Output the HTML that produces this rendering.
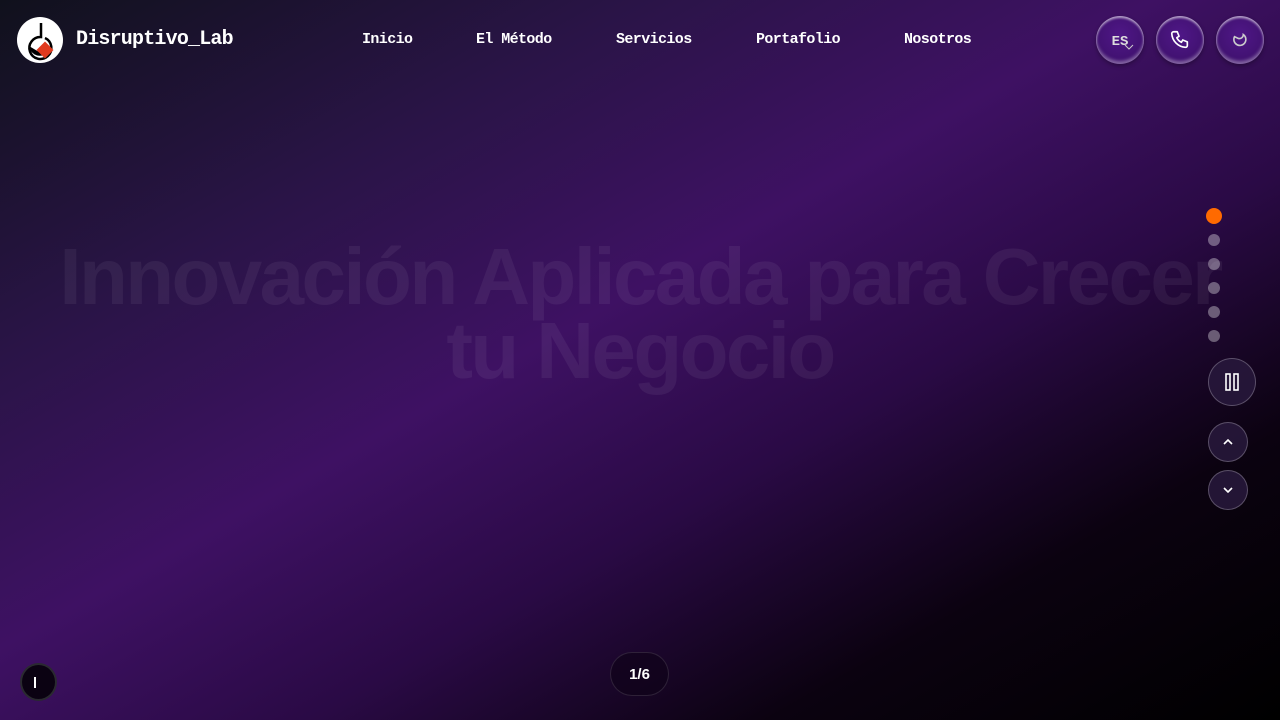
<!DOCTYPE html>
<html><head><meta charset="utf-8"><style>
*{margin:0;padding:0;box-sizing:border-box}
html,body{width:1280px;height:720px;overflow:hidden}
body{position:relative;background:linear-gradient(to bottom right,#10111c 0%,#2a1447 25%,#3e1163 45%,#2a0a45 62%,#0b0210 80%,#000 100%);font-family:"Liberation Mono",monospace;color:#fff}
.logo{position:absolute;left:17px;top:17px;width:46px;height:46px;border-radius:50%;background:#fff}
.brand{position:absolute;left:76px;top:28px;font-weight:bold;font-size:20px;letter-spacing:-0.8px}
.nav a{position:absolute;top:31px;font-weight:bold;font-size:15px;letter-spacing:-0.6px;color:#fff;text-decoration:none}
.rb{position:absolute;top:16px;width:48px;height:48px;border-radius:50%;background:radial-gradient(circle at 50% 40%,#4f1787,#3a0f66);box-shadow:inset 0 2px 2px rgba(255,255,255,.6),inset 0 -3px 3px rgba(255,255,255,.35),0 2px 4px rgba(0,0,0,.3);display:flex;align-items:center;justify-content:center}
h1{position:absolute;left:0;width:1280px;top:240px;text-align:center;font-family:"Liberation Sans",sans-serif;font-weight:bold;font-size:80px;line-height:74px;letter-spacing:-2.6px;color:rgba(255,255,255,0.06)}
.dot{position:absolute;left:1208px;width:12px;height:12px;border-radius:50%;background:rgba(255,255,255,.35)}
.cb{position:absolute;border-radius:50%;border:1px solid rgba(255,255,255,.25);background:rgba(40,25,60,.85);display:flex;align-items:center;justify-content:center}
</style></head><body>
<div class="logo"><svg width="46" height="46" viewBox="0 0 46 46"><path d="M24 6v14a11 11 0 1 0 4 1" fill="none" stroke="#000" stroke-width="2.5"/><path d="M12 29a11 11 0 0 0 15 9z" fill="#000"/><rect x="22" y="27" width="12" height="12" fill="#e03a1e" transform="rotate(45 28 33)"/></svg></div>
<div class="brand">Disruptivo_Lab</div>
<div class="nav"><a style="left:362px">Inicio</a><a style="left:476px">El Método</a><a style="left:616px">Servicios</a><a style="left:756px">Portafolio</a><a style="left:904px">Nosotros</a></div>
<div class="rb" style="left:1096px"><span style="font-weight:bold;font-size:14px;color:#ddd;margin-top:4px">ES</span><svg style="position:absolute;left:28px;top:28px" width="10" height="6"><path d="M1 1l4 4 4-4" stroke="#ccc" fill="none"/></svg></div>
<div class="rb" style="left:1156px"><svg width="22" height="22" viewBox="0 0 24 24"><path d="M5 3h4l2 5-2.5 1.5a11 11 0 0 0 5 5L15 12l5 2v4a2 2 0 0 1-2 2A16 16 0 0 1 3 5a2 2 0 0 1 2-2" fill="none" stroke="#fff" stroke-width="1.8" stroke-linejoin="round"/></svg></div>
<div class="rb" style="left:1216px"><svg width="16" height="16" viewBox="0 0 16 16"><path d="M4 3a6 6 0 1 0 9 1a4 4 0 0 1-6 2z" fill="none" stroke="#ccc" stroke-width="1.6" transform="rotate(-20 8 8)"/></svg></div>
<h1>Innovación Aplicada para Crecer<br>tu Negocio</h1>
<div class="dot" style="left:1206px;top:208px;width:16px;height:16px;background:#ff6a00"></div>
<div class="dot" style="top:234px"></div><div class="dot" style="top:258px"></div><div class="dot" style="top:282px"></div><div class="dot" style="top:306px"></div><div class="dot" style="top:330px"></div>
<div class="cb" style="left:1208px;top:358px;width:48px;height:48px"><svg width="16" height="18"><rect x="2" y="1" width="4" height="16" fill="none" stroke="#fff" stroke-width="1.6"/><rect x="10" y="1" width="4" height="16" fill="none" stroke="#fff" stroke-width="1.6"/></svg></div>
<div class="cb" style="left:1208px;top:422px;width:40px;height:40px"><svg width="10" height="6"><path d="M1 5l4-4 4 4" stroke="#fff" stroke-width="1.6" fill="none"/></svg></div>
<div class="cb" style="left:1208px;top:470px;width:40px;height:40px"><svg width="10" height="6"><path d="M1 1l4 4 4-4" stroke="#fff" stroke-width="1.6" fill="none"/></svg></div>
<div class="cb" style="left:20px;top:663px;width:37px;height:38px;background:#0b0212;border:2px solid #2a2a30"><div style="width:2px;height:11px;background:#fff;margin-left:-8px"></div></div>
<div class="cb" style="left:610px;top:652px;width:59px;height:44px;border-radius:22px;background:rgba(15,3,25,.7);border-color:rgba(255,255,255,.12);font-family:'Liberation Sans',sans-serif;font-weight:bold;font-size:15px">1/6</div>
</body></html>
